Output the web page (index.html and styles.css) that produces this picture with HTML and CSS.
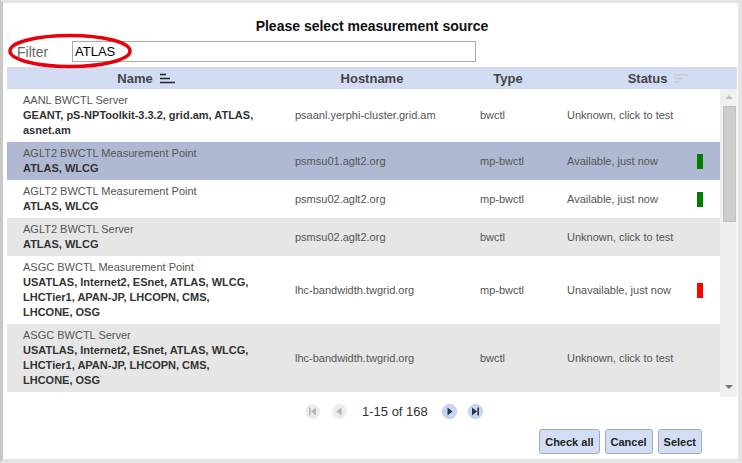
FILE: index.html
```html
<!DOCTYPE html>
<html>
<head>
<meta charset="utf-8">
<link rel="stylesheet" href="styles.css">
</head>
<body>
<div class="frame">
  <div class="title">Please select measurement source</div>
  <div class="filter-row">
    <label class="filter-label">Filter</label>
    <input class="filter-input" type="text" value="ATLAS">
  </div>
  <svg class="annot" width="134" height="40" viewBox="0 0 134 40"><ellipse cx="66" cy="18" rx="60" ry="15.5" fill="none" stroke="#e8000b" stroke-width="3.5"/></svg>

  <div class="thead">
    <div class="th th-name">Name
      <svg class="sort" width="15" height="11" viewBox="0 0 15 11"><path d="M0 1.5h6M0 5.5h10M0 9.5h15" stroke="#222" stroke-width="1.6"/></svg>
    </div>
    <div class="th">Hostname</div>
    <div class="th">Type</div>
    <div class="th th-status">Status
      <svg class="sort" width="14" height="9" viewBox="0 0 14 9"><path d="M0 1h14M0 4.5h9M0 8h5" stroke="#c9c9c9" stroke-width="1.4"/></svg>
    </div>
  </div>

  <div class="tbody">
    <div class="rows">
      <div class="row">
        <div class="c-name"><div class="nm">AANL BWCTL Server</div><div class="tags">GEANT, pS-NPToolkit-3.3.2, grid.am, ATLAS, asnet.am</div></div>
        <div class="c">psaanl.yerphi-cluster.grid.am</div>
        <div class="c">bwctl</div>
        <div class="c c-status"><span class="st">Unknown, click to test</span></div>
      </div>
      <div class="row sel">
        <div class="c-name"><div class="nm">AGLT2 BWCTL Measurement Point</div><div class="tags">ATLAS, WLCG</div></div>
        <div class="c">psmsu01.aglt2.org</div>
        <div class="c">mp-bwctl</div>
        <div class="c c-status"><span class="st">Available, just now</span><span class="ind ok"></span></div>
      </div>
      <div class="row">
        <div class="c-name"><div class="nm">AGLT2 BWCTL Measurement Point</div><div class="tags">ATLAS, WLCG</div></div>
        <div class="c">psmsu02.aglt2.org</div>
        <div class="c">mp-bwctl</div>
        <div class="c c-status"><span class="st">Available, just now</span><span class="ind ok"></span></div>
      </div>
      <div class="row alt">
        <div class="c-name"><div class="nm">AGLT2 BWCTL Server</div><div class="tags">ATLAS, WLCG</div></div>
        <div class="c">psmsu02.aglt2.org</div>
        <div class="c">bwctl</div>
        <div class="c c-status"><span class="st">Unknown, click to test</span></div>
      </div>
      <div class="row">
        <div class="c-name"><div class="nm">ASGC BWCTL Measurement Point</div><div class="tags">USATLAS, Internet2, ESnet, ATLAS, WLCG, LHCTier1, APAN-JP, LHCOPN, CMS, LHCONE, OSG</div></div>
        <div class="c">lhc-bandwidth.twgrid.org</div>
        <div class="c">mp-bwctl</div>
        <div class="c c-status"><span class="st">Unavailable, just now</span><span class="ind bad"></span></div>
      </div>
      <div class="row alt">
        <div class="c-name"><div class="nm">ASGC BWCTL Server</div><div class="tags">USATLAS, Internet2, ESnet, ATLAS, WLCG, LHCTier1, APAN-JP, LHCOPN, CMS, LHCONE, OSG</div></div>
        <div class="c">lhc-bandwidth.twgrid.org</div>
        <div class="c">bwctl</div>
        <div class="c c-status"><span class="st">Unknown, click to test</span></div>
      </div>
    </div>
    <div class="sbar">
      <svg class="sb-up" width="8" height="4" viewBox="0 0 8 4"><path d="M0 4L4 0L8 4Z" fill="#c3c3c3"/></svg>
      <div class="thumb"></div>
      <div class="sb-space"></div>
      <svg class="sb-down" width="8" height="4" viewBox="0 0 8 4"><path d="M0 0L8 0L4 4Z" fill="#777"/></svg>
    </div>
  </div>

  <div class="pager">
    <span class="pbtn dis p-first"><svg width="9" height="9" viewBox="0 0 9 9"><path d="M1 0.5h1.6v8H1z M8 0.5v8L3 4.5z" fill="#b5b5b5"/></svg></span>
    <span class="pbtn dis p-prev"><svg width="9" height="9" viewBox="0 0 9 9"><path d="M6.5 0.5v8L1.5 4.5z" fill="#b5b5b5"/></svg></span>
    <span class="ptext">1-15 of 168</span>
    <span class="pbtn on p-next"><svg width="9" height="9" viewBox="0 0 9 9"><path d="M2.5 0.5v8L7.5 4.5z" fill="#333"/></svg></span>
    <span class="pbtn on p-last"><svg width="9" height="9" viewBox="0 0 9 9"><path d="M1 0.5v8L6 4.5z M6.4 0.5h1.6v8H6.4z" fill="#333"/></svg></span>
  </div>

  <div class="actions">
    <button class="btn">Check all</button>
    <button class="btn">Cancel</button>
    <button class="btn">Select</button>
  </div>
</div>
</body>
</html>
```

FILE: styles.css
```css
html, body {
  margin: 0;
  padding: 0;
  background: #fff;
}
.frame {
  position: relative;
  width: 742px;
  height: 463px;
  box-sizing: border-box;
  border-style: solid;
  border-color: #e4e4e4;
  border-left-color: #c8c8c8;
  border-width: 3px 4px 4px 3px;
  padding: 0 1px 0 4px;
  font-family: "Liberation Sans", Arial, sans-serif;
  color: #333;
  overflow: hidden;
}
.title {
  margin-top: 13px;
  height: 20px;
  line-height: 20px;
  text-align: center;
  font-weight: bold;
  font-size: 14px;
  color: #111;
}
.filter-row {
  margin-top: 5px;
  display: flex;
  align-items: center;
  height: 21px;
}
.filter-label {
  width: 65px;
  box-sizing: border-box;
  padding-left: 10px;
  font-size: 14px;
  color: #666;
}
.filter-input {
  width: 404px;
  height: 21px;
  box-sizing: border-box;
  margin: 0;
  border: 1px solid #a9a9a9;
  padding: 0 2px;
  font-family: "Liberation Sans", Arial, sans-serif;
  font-size: 13px;
  color: #000;
  outline: none;
}
.annot {
  position: absolute;
  left: 1px;
  top: 30px;
}
.thead {
  margin-top: 5px;
  height: 22px;
  background: #d2ddf4;
  display: grid;
  grid-template-columns: 278px 174px 98px 1fr;
}
.th {
  display: flex;
  align-items: center;
  justify-content: center;
  font-weight: bold;
  font-size: 13px;
  color: #444;
}
.th-status {
  padding-left: 22px;
}
.sort {
  margin-left: 7px;
}
.tbody {
  display: flex;
  height: 303px;
}
.rows {
  flex: 1;
}
.row {
  display: grid;
  grid-template-columns: 278px 185px 87px 1fr;
  font-size: 11px;
  line-height: 15px;
  color: #555;
  background: #fff;
}
.row.sel {
  background: #afb9d3;
}
.row.alt {
  background: #e6e6e6;
}
.c-name {
  padding: 4px 26px 4px 16px;
}
.tags {
  font-weight: bold;
  color: #333;
}
.c {
  display: flex;
  align-items: center;
  padding-left: 10px;
}
.c-status .st {
  flex: 1;
}
.ind {
  width: 6px;
  height: 15px;
  margin-right: 17px;
}
.ind.ok {
  background: #008000;
}
.ind.bad {
  background: #ff0000;
}
.sbar {
  width: 17px;
  height: 308px;
  background: #f0f0f0;
  display: flex;
  flex-direction: column;
  align-items: center;
  position: relative;
  z-index: 1;
}
.sb-up {
  margin-top: 6px;
}
.thumb {
  margin-top: 7px;
  width: 13px;
  height: 116px;
  box-sizing: border-box;
  background: #cdcdcd;
  border: 1px solid #c2c2c2;
  margin-left: 1px;
}
.sb-space {
  flex: 1;
}
.sb-down {
  margin-bottom: 8px;
}
.pager {
  margin-top: 12px;
  height: 15px;
  display: flex;
  align-items: center;
  padding-left: 298px;
  font-size: 13px;
}
.pbtn {
  width: 15px;
  height: 15px;
  border-radius: 50%;
  display: flex;
  align-items: center;
  justify-content: center;
  box-sizing: border-box;
}
.pbtn.dis {
  background: #ececec;
}
.pbtn.on {
  background: #c6d7f5;
  border: 1px solid #b9cbef;
}
.p-prev {
  margin-left: 12px;
}
.ptext {
  margin-left: 15px;
  color: #333;
}
.p-next {
  margin-left: 14px;
}
.p-last {
  margin-left: 11px;
}
.actions {
  margin-top: 10px;
  display: flex;
  justify-content: flex-end;
  gap: 5px;
  padding-right: 35px;
}
.btn {
  height: 25px;
  margin: 0;
  padding: 0 5px;
  border: 1px solid #a3abbd;
  border-radius: 3px;
  background: #d3def5;
  font-family: "Liberation Sans", Arial, sans-serif;
  font-weight: bold;
  font-size: 11px;
  color: #222;
}
```
